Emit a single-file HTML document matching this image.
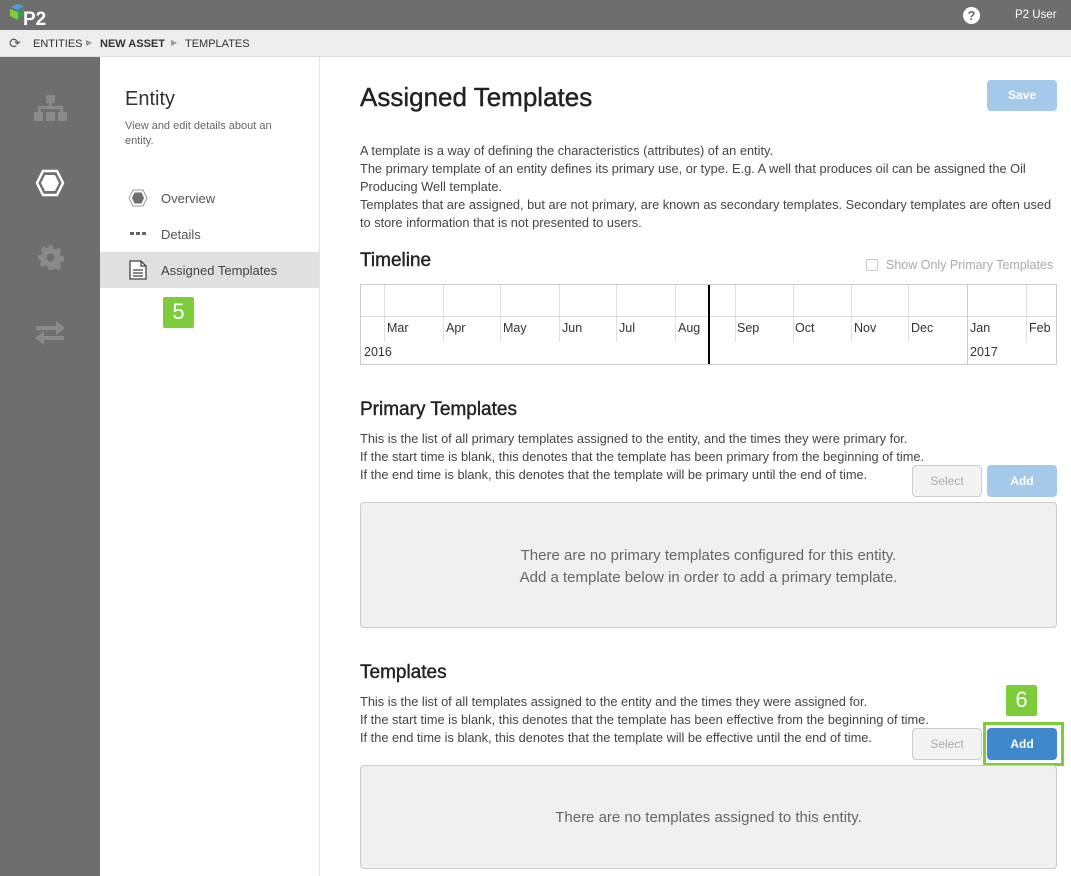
<!DOCTYPE html>
<html><head><meta charset="utf-8"><style>
*{box-sizing:border-box;margin:0;padding:0}
body{width:1071px;height:876px;overflow:hidden;font-family:"Liberation Sans",sans-serif;background:#fff;position:relative;color:#333}
.abs{position:absolute}
.top{left:0;top:0;width:1071px;height:30px;background:#6e6e6e}
.crumb{left:0;top:30px;width:1071px;height:27px;background:#eeeeee;border-bottom:1px solid #ddd;font-size:11px;color:#333}
.rail{left:0;top:57px;width:100px;height:819px;background:#6e6e6e}
.side{left:100px;top:57px;width:220px;height:819px;background:#fff;border-right:1px solid #e3e3e3}
.p{font-size:12.8px;line-height:18px;color:#444}
.btn{border-radius:4px;font-size:12px;font-weight:bold;text-align:center;color:#fff}
.sel{background:#f3f3f3;border:1px solid #ccc;color:#aaa;font-weight:normal}
.box{border:1px solid #ccc;border-radius:4px;background:#f0f0f0;text-align:center;color:#666;font-size:15px;line-height:22px}
.badge{background:#7dcc3c;color:#fff;font-size:22px;text-align:center;border-radius:2px}
.m{font-size:12.5px;color:#333}
.vl{width:1px;background:#e0e0e0}
.h{font-size:19px;color:#222;-webkit-text-stroke:0.4px #222}
</style></head><body>
<div class="abs top"></div>
<svg class="abs" style="left:9px;top:3px" width="44" height="24" viewBox="0 0 44 24">
<polygon points="2,4 8,1 15,3 9,7" fill="#4aa3df"/><polygon points="1,6 9,9 9,17 1,13" fill="#7dcc3c"/><polygon points="9,9 15,6 15,12 9,16" fill="#3b9a4a"/>
<text x="14" y="22" font-family="Liberation Sans" font-weight="bold" font-size="19" fill="#fff">P2</text></svg>
<div class="abs" style="left:963px;top:7px;width:17px;height:17px;border-radius:50%;background:#fff;color:#6e6e6e;font-weight:bold;font-size:13px;text-align:center;line-height:17px">?</div>
<div class="abs" style="left:1015px;top:9px;font-size:11.5px;color:#fff">P2 User</div>
<div class="abs crumb"><span class="abs" style="left:9px;top:5px;font-size:14px;color:#555">⟳</span>
<span class="abs" style="left:33px;top:8px">ENTITIES</span><span class="abs" style="left:86px;top:8px;color:#999;font-size:8px">▶</span>
<span class="abs" style="left:100px;top:8px;font-weight:bold">NEW ASSET</span><span class="abs" style="left:171px;top:8px;color:#999;font-size:8px">▶</span>
<span class="abs" style="left:185px;top:8px">TEMPLATES</span></div>
<div class="abs rail"></div>
<svg class="abs" style="left:34px;top:95px" width="33" height="26" viewBox="0 0 33 26" fill="#8a8a8a"><rect x="12" y="0" width="9" height="8"/><rect x="15" y="8" width="3" height="5"/><rect x="4" y="11" width="25" height="3"/><rect x="4" y="12" width="3" height="6"/><rect x="26" y="12" width="3" height="6"/><rect x="0" y="17" width="9" height="9"/><rect x="12" y="17" width="9" height="9"/><rect x="24" y="17" width="9" height="9"/></svg>
<svg class="abs" style="left:35px;top:169px" width="30" height="28" viewBox="0 0 30 28"><polygon points="8,2 22,2 28,14 22,26 8,26 2,14" fill="none" stroke="#fff" stroke-width="2.5"/><polygon points="10,6 20,6 24,14 20,22 10,22 6,14" fill="#fff"/></svg>
<svg class="abs" style="left:37px;top:244px" width="27" height="27" viewBox="0 0 24 24"><path fill="#8a8a8a" d="M10 1h4l.6 3.1 2 .9 2.6-1.8 2.8 2.8-1.8 2.6.9 2 3.1.6v4l-3.1.6-.9 2 1.8 2.6-2.8 2.8-2.6-1.8-2 .9L14 23h-4l-.6-3.1-2-.9-2.6 1.8-2.8-2.8 1.8-2.6-.9-2L1 14v-4l3.1-.6.9-2L3.2 4.8 6 2l2.6 1.8 2-.9z"/><circle cx="12" cy="12" r="3.5" fill="#6e6e6e"/></svg>
<svg class="abs" style="left:34px;top:321px" width="32" height="24" viewBox="0 0 32 24" fill="#8a8a8a"><rect x="2" y="5" width="22" height="4"/><polygon points="22,0 31,7 22,14"/><rect x="8" y="15" width="22" height="4"/><polygon points="10,10 1,17 10,24"/></svg>
<div class="abs side"></div>
<div class="abs" style="left:125px;top:88px;font-size:20px;color:#333">Entity</div>
<div class="abs" style="left:125px;top:119px;font-size:11px;line-height:15px;color:#666;width:170px">View and edit details about an entity.</div>
<svg class="abs" style="left:128px;top:189px" width="20" height="18" viewBox="0 0 20 18"><polygon points="5,1 15,1 19,9 15,17 5,17 1,9" fill="#fff" stroke="#999"/><polygon points="6.5,3.5 13.5,3.5 16,9 13.5,14.5 6.5,14.5 4,9" fill="#6e6e6e"/></svg>
<div class="abs" style="left:161px;top:191px;font-size:13px;color:#555">Overview</div>
<div class="abs" style="left:130px;top:232px;width:16px;height:3px;border-left:4px solid #666;border-right:4px solid #666;background:linear-gradient(90deg,transparent 2px,#666 2px,#666 6px,transparent 6px)"></div>
<div class="abs" style="left:161px;top:227px;font-size:13px;color:#555">Details</div>
<div class="abs" style="left:100px;top:252px;width:219px;height:36px;background:#e0e0e0"></div>
<svg class="abs" style="left:129px;top:260px" width="18" height="20" viewBox="0 0 18 20"><path d="M1 1h11l5 5v13H1z" fill="#fff" stroke="#444" stroke-width="1.3"/><path d="M12 1v5h5M4 10h10M4 13h10M4 16h10" stroke="#444" stroke-width="1.3" fill="none"/></svg>
<div class="abs" style="left:161px;top:263px;font-size:13px;color:#444">Assigned Templates</div>
<div class="abs badge" style="left:163px;top:297px;width:31px;height:31px;line-height:30px">5</div>

<div class="abs" style="left:360px;top:82px;font-size:26px;color:#222;-webkit-text-stroke:0.4px #222">Assigned Templates</div>
<div class="abs btn" style="left:987px;top:80px;width:70px;height:31px;line-height:31px;background:#a5c9e8">Save</div>
<div class="abs p" style="left:360px;top:142px;width:700px">A template is a way of defining the characteristics (attributes) of an entity.<br>The primary template of an entity defines its primary use, or type. E.g. A well that produces oil can be assigned the Oil Producing Well template.<br>Templates that are assigned, but are not primary, are known as secondary templates. Secondary templates are often used to store information that is not presented to users.</div>
<div class="abs h" style="left:360px;top:250px">Timeline</div>
<div class="abs" style="left:866px;top:259px;width:12px;height:12px;border:1px solid #ccc;border-radius:2px"></div>
<div class="abs" style="left:886px;top:258px;font-size:12.5px;color:#aaa">Show Only Primary Templates</div>
<div class="abs" style="left:360px;top:284px;width:697px;height:81px;border:1px solid #ccc">
<div class="abs" style="left:0;top:31px;width:695px;height:1px;background:#ddd"></div>
</div>
<div class="abs vl" style="left:384px;top:285px;height:57px"></div>
<div class="abs vl" style="left:443px;top:285px;height:57px"></div>
<div class="abs vl" style="left:500px;top:285px;height:57px"></div>
<div class="abs vl" style="left:559px;top:285px;height:57px"></div>
<div class="abs vl" style="left:616px;top:285px;height:57px"></div>
<div class="abs vl" style="left:675px;top:285px;height:57px"></div>
<div class="abs vl" style="left:735px;top:285px;height:57px"></div>
<div class="abs vl" style="left:793px;top:285px;height:57px"></div>
<div class="abs vl" style="left:851px;top:285px;height:57px"></div>
<div class="abs vl" style="left:908px;top:285px;height:57px"></div>
<div class="abs vl" style="left:967px;top:285px;height:79px;background:#ccc"></div>
<div class="abs vl" style="left:1026px;top:285px;height:57px"></div>
<div class="abs" style="left:708px;top:285px;width:2px;height:79px;background:#000"></div>
<div class="abs m" style="left:387px;top:321px">Mar</div><div class="abs m" style="left:446px;top:321px">Apr</div><div class="abs m" style="left:503px;top:321px">May</div><div class="abs m" style="left:562px;top:321px">Jun</div><div class="abs m" style="left:619px;top:321px">Jul</div><div class="abs m" style="left:678px;top:321px">Aug</div><div class="abs m" style="left:737px;top:321px">Sep</div><div class="abs m" style="left:795px;top:321px">Oct</div><div class="abs m" style="left:854px;top:321px">Nov</div><div class="abs m" style="left:911px;top:321px">Dec</div><div class="abs m" style="left:970px;top:321px">Jan</div><div class="abs m" style="left:1029px;top:321px">Feb</div>
<div class="abs m" style="left:364px;top:345px">2016</div><div class="abs m" style="left:970px;top:345px">2017</div>

<div class="abs h" style="left:360px;top:399px">Primary Templates</div>
<div class="abs p" style="left:360px;top:430px">This is the list of all primary templates assigned to the entity, and the times they were primary for.<br>If the start time is blank, this denotes that the template has been primary from the beginning of time.<br>If the end time is blank, this denotes that the template will be primary until the end of time.</div>
<div class="abs btn sel" style="left:912px;top:465px;width:70px;height:32px;line-height:30px">Select</div>
<div class="abs btn" style="left:987px;top:465px;width:70px;height:32px;line-height:32px;background:#a5c9e8">Add</div>
<div class="abs box" style="left:360px;top:502px;width:697px;height:126px;padding-top:42px">There are no primary templates configured for this entity.<br>Add a template below in order to add a primary template.</div>

<div class="abs h" style="left:360px;top:662px">Templates</div>
<div class="abs p" style="left:360px;top:693px">This is the list of all templates assigned to the entity and the times they were assigned for.<br>If the start time is blank, this denotes that the template has been effective from the beginning of time.<br>If the end time is blank, this denotes that the template will be effective until the end of time.</div>
<div class="abs badge" style="left:1006px;top:685px;width:31px;height:31px;line-height:30px">6</div>
<div class="abs btn sel" style="left:912px;top:728px;width:70px;height:32px;line-height:30px">Select</div>
<div class="abs" style="left:983px;top:722px;width:81px;height:44px;border:3px solid #7dcc3c"></div>
<div class="abs btn" style="left:987px;top:728px;width:70px;height:32px;line-height:32px;background:#3f88cb">Add</div>
<div class="abs box" style="left:360px;top:765px;width:697px;height:104px;padding-top:41px">There are no templates assigned to this entity.</div>
</body></html>
